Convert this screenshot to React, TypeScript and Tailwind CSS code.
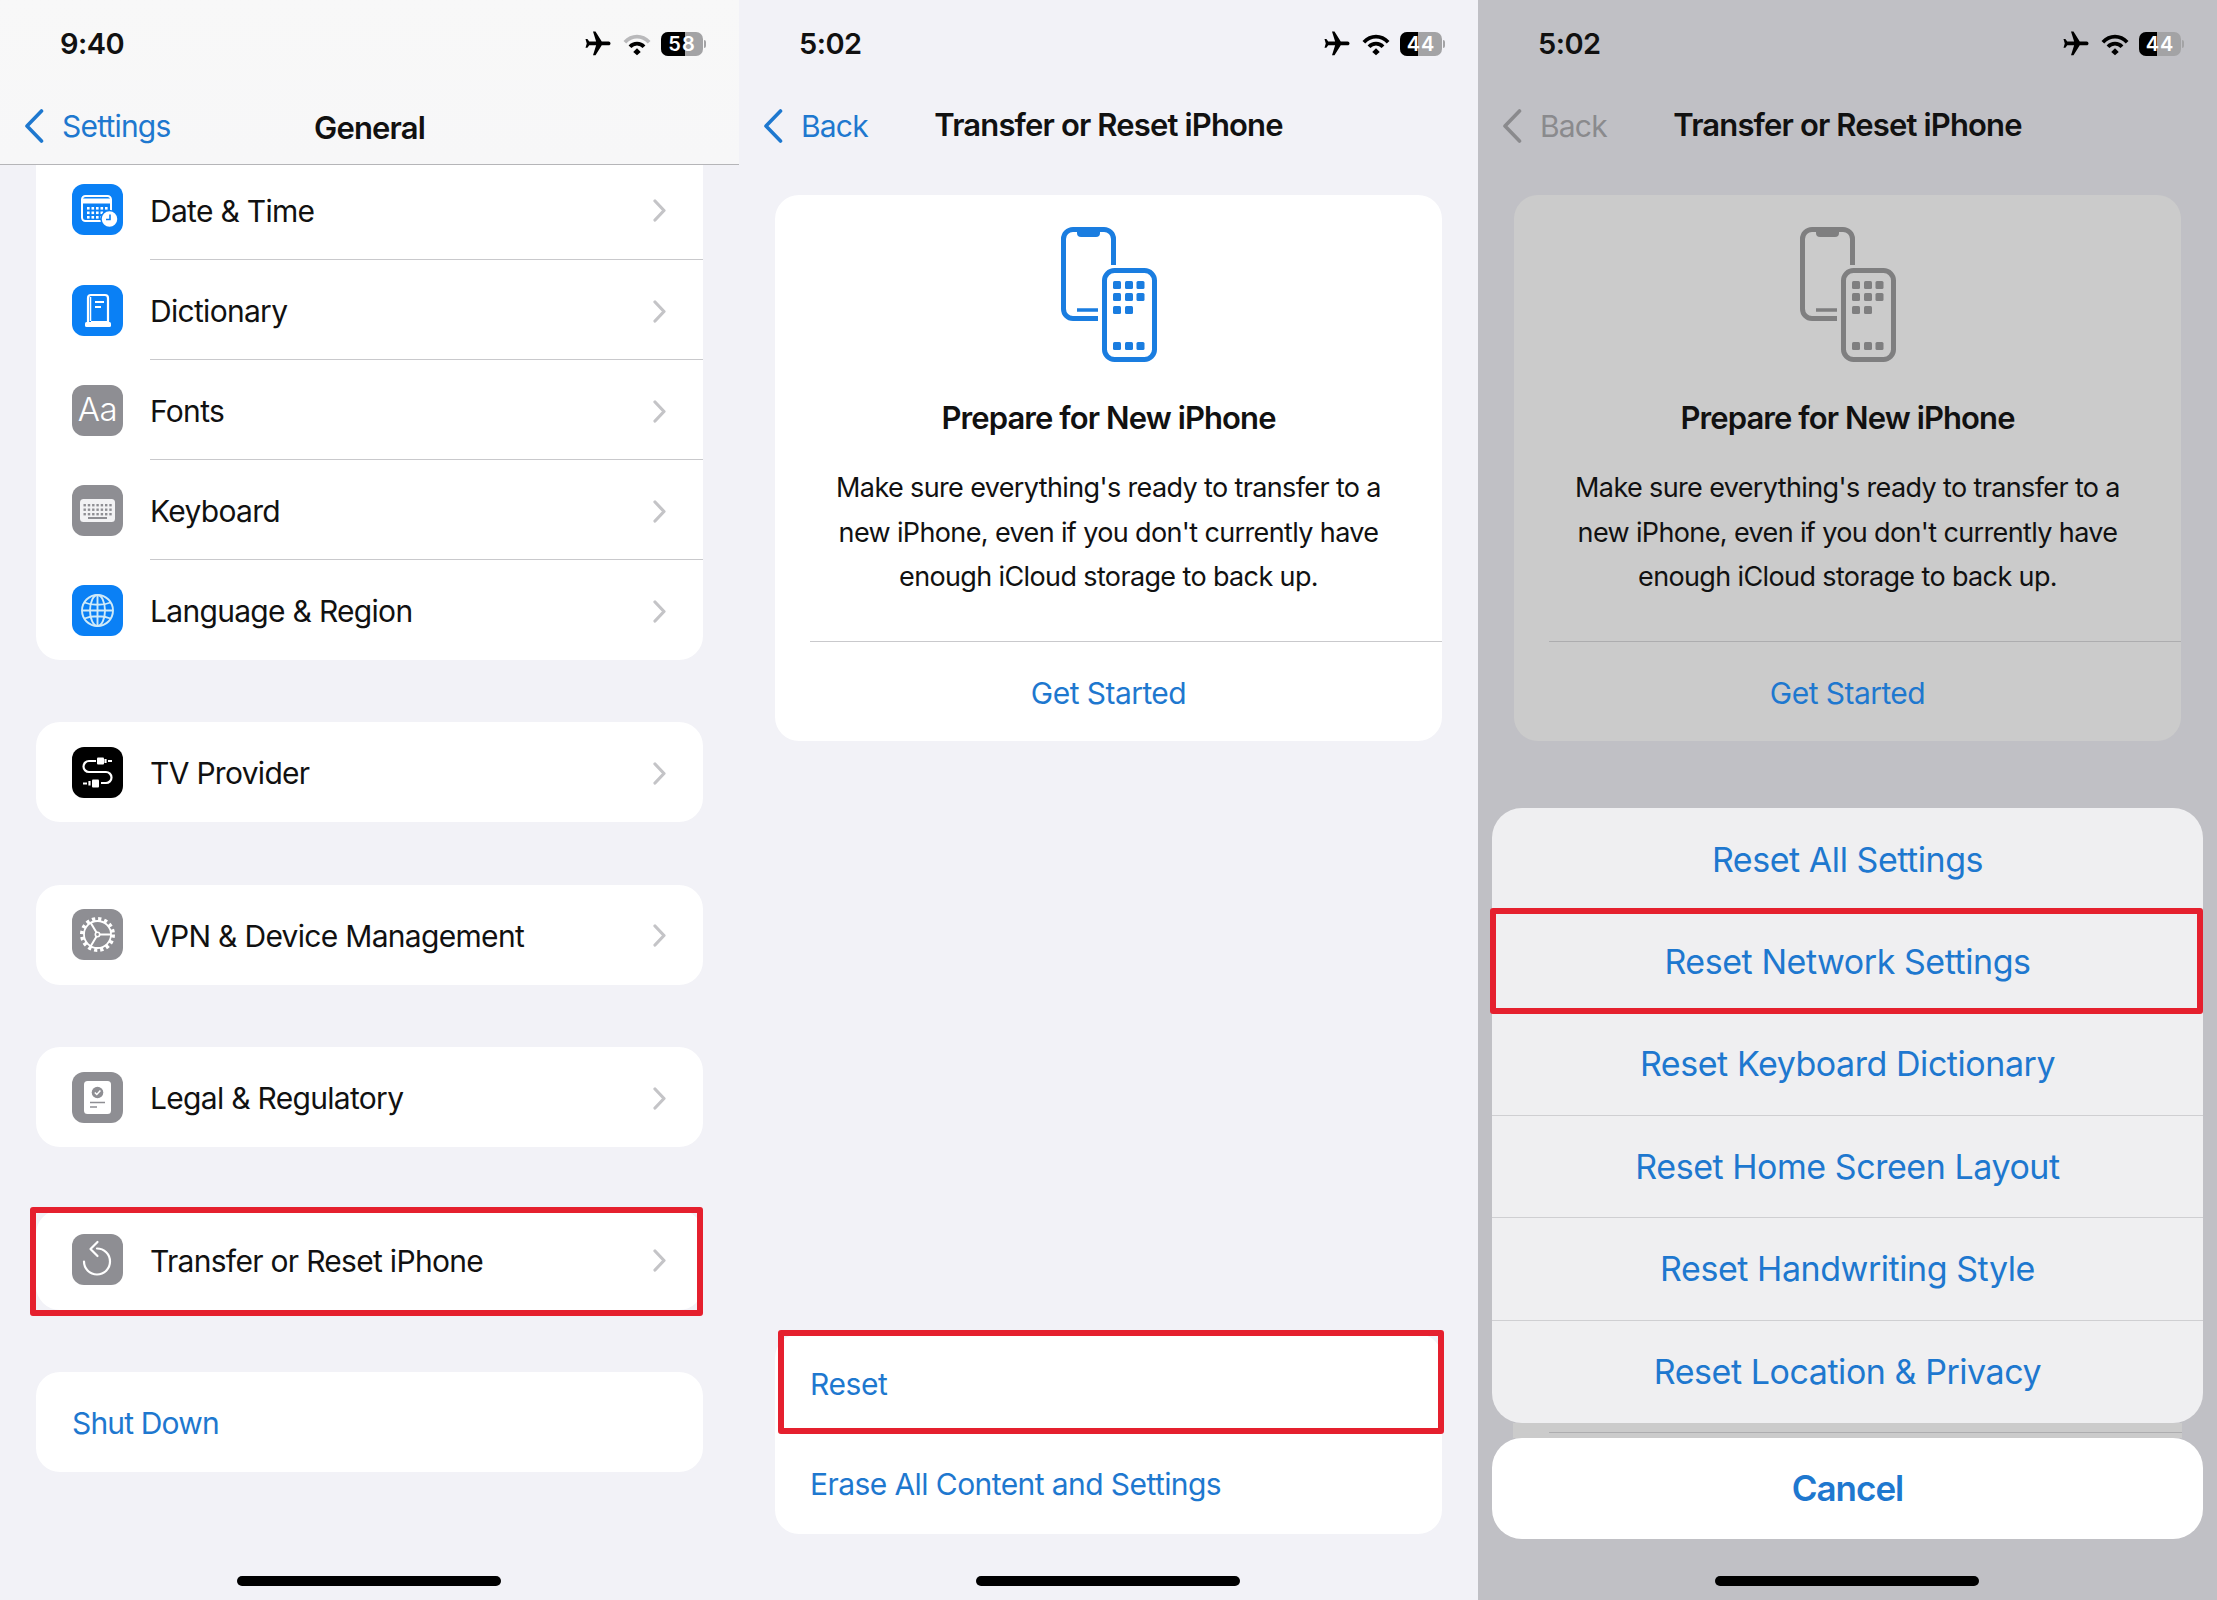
import React from "react";

const BLUE = "#1e78cf";

function Plane() {
  return (
    <svg viewBox="0 0 24 24" className="w-[30px] h-[30px] shrink-0" fill="#000">
      <path transform="rotate(90 12 12)" d="M21 16v-2l-8-5V3.5c0-.83-.67-1.5-1.5-1.5S10 2.67 10 3.5V9l-8 5v2l8-2.5V19l-2 1.5V22l3.5-1 3.5 1v-1.5L13 19v-5.5l8 2.5z" />
    </svg>
  );
}

function Wifi({ faded }: { faded?: boolean }) {
  return (
    <svg viewBox="0 0 30 24" className="w-[28px] h-[23px] shrink-0" fill="none" strokeWidth="4">
      <path d="M2 9.5C9.5 1.5 20.5 1.5 28 9.5" stroke={faded ? "#b9b9bb" : "#000"} />
      <path d="M7.5 14.5C11.5 10 18.5 10 22.5 14.5" stroke="#000" />
      <path d="M11 20 15 16l4 4-4 3.5z" fill="#000" />
    </svg>
  );
}

function Battery({ level }: { level: number }) {
  return (
    <div className="flex items-center gap-[1px] shrink-0">
      <div className="relative w-[42px] h-[24px] rounded-[7px] overflow-hidden bg-[#a3a3a5]">
        <div className="h-full bg-black" style={{ width: `${level}%` }} />
        <div className="absolute inset-0 flex items-center justify-center text-[20px] font-semibold text-white leading-none tracking-[1px]">
          {level}
        </div>
      </div>
      <div className="w-[2px] h-[8px] rounded-r-full bg-[#a3a3a5]" />
    </div>
  );
}

function StatusBar({ time, level, faded }: { time: string; level: number; faded?: boolean }) {
  return (
    <div className="h-[88px] flex items-center justify-between pl-[60px] pr-[33px]">
      <span className="text-[29px] font-semibold text-[#111] tracking-[-0.5px]">{time}</span>
      <div className="flex items-center gap-[10px]">
        <Plane />
        <Wifi faded={faded} />
        <Battery level={level} />
      </div>
    </div>
  );
}

function NavBar({ back, title, backColor = BLUE, titleClass = "-translate-y-[1px]" }: { back: string; title: string; backColor?: string; titleClass?: string }) {
  return (
    <div className="h-[76px] grid grid-cols-[1fr_auto_1fr] items-center px-[24px]">
      <div className="flex items-center gap-[18px]" style={{ color: backColor }}>
        <svg viewBox="0 0 20 34" className="w-[20px] h-[34px] shrink-0" fill="none" stroke="currentColor" strokeWidth="3.6" strokeLinecap="round" strokeLinejoin="round">
          <path d="M17.5 2 3 17l14.5 15" />
        </svg>
        <span className="text-[30px] tracking-[-0.8px]">{back}</span>
      </div>
      <span className={`text-[31px] font-semibold text-[#111] tracking-[-0.85px] ${titleClass}`}>{title}</span>
      <div />
    </div>
  );
}

function HomeBar() {
  return <div className="absolute left-[237px] bottom-[14px] w-[264px] h-[10px] rounded-full bg-black" />;
}

function RedBox({ className }: { className: string }) {
  return <div className={`absolute border-[6px] border-[#e5202e] rounded-[3px] ${className}`} />;
}

function Chevron() {
  return (
    <svg viewBox="0 0 13 23" className="w-[13px] h-[23px] shrink-0 translate-y-[1px]" fill="none" stroke="#c4c4c7" strokeWidth="3.2" strokeLinecap="round" strokeLinejoin="round">
      <path d="M2 2l9 9.5-9 9.5" />
    </svg>
  );
}

function Tile({ bg, children }: { bg: string; children: React.ReactNode }) {
  return (
    <div className={`w-[51px] h-[51px] rounded-[12px] flex items-center justify-center shrink-0 ${bg}`}>
      {children}
    </div>
  );
}

const DateIcon = (
  <svg viewBox="0 0 51 51" className="w-[51px] h-[51px]" fill="none">
    <rect x="10" y="12" width="29" height="25" rx="3.5" stroke="#fff" strokeWidth="2" fill="none" />
    <path d="M10 17h29" stroke="#fff" strokeWidth="5" />
    {[23, 27.5, 32].map((y) => [15, 19.5, 24, 28.5, 33].map((x) => <rect key={`${x}-${y}`} x={x} y={y} width="2.6" height="2.6" fill="#fff" />))}
    <circle cx="37.5" cy="35" r="8.5" fill="#fff" stroke="#0a80f5" strokeWidth="1.5" />
    <path d="M38 30.5v5h-4" stroke="#0a80f5" strokeWidth="1.6" />
  </svg>
);

const DictIcon = (
  <svg viewBox="0 0 51 51" className="w-[51px] h-[51px]" fill="none">
    <path d="M16 38V13a3 3 0 0 1 3-3h14a3 3 0 0 1 3 3v24H19" stroke="#fff" strokeWidth="2.2" fill="#0a80f5" />
    <rect x="13" y="37" width="26" height="5" rx="1.5" fill="#fff" />
    <path d="M18.5 12v24" stroke="#fff" strokeWidth="1.5" />
    <path d="M23 17h9M23 22h6" stroke="#fff" strokeWidth="2" />
  </svg>
);

const KeyboardIcon = (
  <svg viewBox="0 0 51 51" className="w-[51px] h-[51px]">
    <rect x="8" y="14" width="35" height="23" rx="3.5" fill="#f2f2f4" />
    {[19, 23.5, 28].map((y) => [11.5, 15.8, 20.1, 24.4, 28.7, 33, 37.3].map((x) => <rect key={`${x}-${y}`} x={x} y={y} width="2.4" height="2.4" fill="#8e8e93" />))}
    <rect x="16" y="32" width="19" height="2" fill="#8e8e93" />
  </svg>
);

const GlobeIcon = (
  <svg viewBox="0 0 51 51" className="w-[51px] h-[51px]" fill="none" stroke="#cfeaf8" strokeWidth="1.9">
    <circle cx="25.5" cy="25.5" r="15.5" />
    <ellipse cx="25.5" cy="25.5" rx="7.5" ry="15.5" />
    <path d="M25.5 10v31M10 25.5h31M12.5 17.5c7 3 19 3 26 0M12.5 33.5c7-3 19-3 26 0" />
  </svg>
);

const TvIcon = (
  <svg viewBox="0 0 51 51" className="w-[51px] h-[51px]" fill="none" stroke="#fff" strokeWidth="2.2">
    <path d="M24 14h-7a5.5 5.5 0 0 0 0 11h17a5.5 5.5 0 0 1 0 11h-5" />
    <rect x="25" y="10.5" width="7" height="7" rx="1" fill="#fff" stroke="none" />
    <path d="M33.5 12v4M36 14h4" />
    <rect x="20" y="32.5" width="7" height="8" rx="1" fill="#fff" stroke="none" />
    <path d="M17.5 34v4.500M11 36.500h4" />
  </svg>
);

const GearIcon = (
  <svg viewBox="0 0 51 51" className="w-[51px] h-[51px]" fill="none" stroke="#fff">
    <circle cx="25.5" cy="25.5" r="15.500" strokeWidth="4" strokeDasharray="3.2 2.9" />
    <circle cx="25.5" cy="25.5" r="13.5" strokeWidth="1.8" />
    <circle cx="25.5" cy="25.5" r="2.200" strokeWidth="1.6" />
    <path d="M27.500 25.500H39M24.500 23.600 18.500 13.500M24.500 27.400l-6 10" strokeWidth="2" />
  </svg>
);

const LegalIcon = (
  <svg viewBox="0 0 51 51" className="w-[51px] h-[51px]" fill="none">
    <rect x="12" y="9" width="27" height="33" rx="3.5" fill="#fff" />
    <circle cx="25.500" cy="20.500" r="5.800" fill="#8e8e93" />
    <path d="m22.800 20.500 2 2 3.600-4" stroke="#fff" strokeWidth="1.500" />
    <path d="M18 30.500h15" stroke="#8e8e93" strokeWidth="1.500" />
    <path d="M18 35h7" stroke="#8e8e93" strokeWidth="1.500" />
  </svg>
);

const ResetIcon = (
  <svg viewBox="0 0 51 51" className="w-[51px] h-[51px]" fill="none" stroke="#fff" strokeWidth="2.200" strokeLinecap="round" strokeLinejoin="round">
    <path d="M25 14.500a13 13 0 1 1-13 13" />
    <path d="M25.500 8 18.500 15l7 7" />
  </svg>
);

function Row({ icon, label, tall = true, divider = false }: { icon: React.ReactNode; label: string; tall?: boolean; divider?: boolean }) {
  return (
    <div className={`relative flex items-center pl-[36px] pr-[37px] box-border ${tall ? "h-[100px]" : "h-[95px] pb-[6px]"}`}>
      {icon}
      <span className="ml-[27px] flex-1 text-[30px] text-[#111] tracking-[-0.7px] pt-[3px]">{label}</span>
      <Chevron />
      {divider && <div className="absolute left-[114px] right-0 bottom-0 h-px bg-[#c9c9cc]" />}
    </div>
  );
}

function Screen1() {
  return (
    <div className="relative w-[739px] h-[1600px] bg-[#f2f2f7] overflow-hidden shrink-0">
      <div className="bg-gradient-to-b from-[#f8f8f8] to-[#f7f7f8] border-b border-[#b5b5b8]">
        <StatusBar time="9:40" level={58} faded />
        <NavBar back="Settings" title="General" titleClass="translate-y-[2px]" />
      </div>
      <div className="mx-[36px] flex flex-col gap-[62.4px]">
        <div className="bg-white rounded-b-[24px]">
          <Row tall={false} divider icon={<Tile bg="bg-[#0a80f5]">{DateIcon}</Tile>} label="Date & Time" />
          <Row divider icon={<Tile bg="bg-[#0a80f5]">{DictIcon}</Tile>} label="Dictionary" />
          <Row divider icon={<Tile bg="bg-[#8e8e93]"><span className="text-[33px] font-light text-white tracking-[-0.5px]">Aa</span></Tile>} label="Fonts" />
          <Row divider icon={<Tile bg="bg-[#8e8e93]">{KeyboardIcon}</Tile>} label="Keyboard" />
          <Row icon={<Tile bg="bg-[#0a80f5]">{GlobeIcon}</Tile>} label="Language & Region" />
        </div>
        <div className="bg-white rounded-[24px]">
          <Row icon={<Tile bg="bg-black">{TvIcon}</Tile>} label="TV Provider" />
        </div>
        <div className="bg-white rounded-[24px]">
          <Row icon={<Tile bg="bg-[#8e8e93]">{GearIcon}</Tile>} label="VPN & Device Management" />
        </div>
        <div className="bg-white rounded-[24px]">
          <Row icon={<Tile bg="bg-[#8e8e93]">{LegalIcon}</Tile>} label="Legal & Regulatory" />
        </div>
        <div className="relative bg-white rounded-[24px]">
          <Row icon={<Tile bg="bg-[#8e8e93]">{ResetIcon}</Tile>} label="Transfer or Reset iPhone" />
          <RedBox className="-left-[6px] right-0 -top-[3px] -bottom-[6px]" />
        </div>
        <div className="bg-white rounded-[24px] h-[100px] flex items-center pl-[36px]">
          <span className="text-[30px] tracking-[-0.84px] pt-[3px]" style={{ color: BLUE }}>Shut Down</span>
        </div>
      </div>
      <HomeBar />
    </div>
  );
}

function PhonesIcon({ color }: { color: string }) {
  const rows: [number, number[]][] = [
    [54, [52, 64, 75.5]],
    [66, [52, 64, 75.5]],
    [79, [52, 64]],
    [115, [52, 64, 75.5]],
  ];
  return (
    <svg viewBox="0 0 96 135" className="w-[96px] h-[135px] mx-auto block" fill="none">
      <path d="M52.500 38V12a9.500 9.500 0 0 0-9.500-9.500H12A9.500 9.500 0 0 0 2.500 12v70a9.500 9.500 0 0 0 9.500 9.500h25" stroke={color} strokeWidth="5" />
      <path d="M16 2h23v4a4 4 0 0 1-4 4H20a4 4 0 0 1-4-4z" fill={color} />
      <path d="M16 83h21" stroke={color} strokeWidth="3.500" />
      <rect x="43.500" y="43.500" width="50" height="89" rx="10" stroke={color} strokeWidth="5" />
      {rows.map(([y, xs]) => xs.map((x) => <rect key={`${x}-${y}`} x={x} y={y} width="8" height="8" rx="1.500" fill={color} />))}
    </svg>
  );
}

function PrepareCard({ bg, iconColor, divider }: { bg: string; iconColor: string; divider: string }) {
  return (
    <div className={`mx-[36px] mt-[31px] rounded-[24px] text-center ${bg}`}>
      <div className="pt-[32px]">
        <PhonesIcon color={iconColor} />
      </div>
      <div className="mt-[36px] h-[40px] leading-[40px] text-[31px] font-semibold text-[#111] tracking-[-0.9px]">
        Prepare for New iPhone
      </div>
      <div className="mt-[28px] text-[27px] leading-[44.7px] text-[#111] tracking-[-0.63px]">
        <div>Make sure everything's ready to transfer to a</div>
        <div>new iPhone, even if you don't currently have</div>
        <div>enough iCloud storage to back up.</div>
      </div>
      <div className={`mt-[41px] ml-[35px] h-px ${divider}`} />
      <div className="h-[99px] flex items-center justify-center text-[30px] tracking-[-0.55px] pt-[3px]" style={{ color: BLUE }}>
        Get Started
      </div>
    </div>
  );
}

function Screen2() {
  return (
    <div className="relative w-[739px] h-[1600px] bg-[#f2f2f7] overflow-hidden shrink-0 flex flex-col">
      <StatusBar time="5:02" level={44} />
      <NavBar back="Back" title="Transfer or Reset iPhone" />
      <PrepareCard bg="bg-white" iconColor="#1a7de0" divider="bg-[#c9c9cc]" />
      <div className="flex-1" />
      <div className="mx-[36px] mb-[66px] bg-white rounded-[24px]">
        <div className="relative h-[100px] flex items-center pl-[35px]">
          <span className="text-[30px] tracking-[-0.4px]" style={{ color: BLUE }}>Reset</span>
          <RedBox className="left-[3px] -right-[2px] -top-[4px] bottom-0" />
        </div>
        <div className="h-[100px] flex items-center pl-[35px]">
          <span className="text-[30px] tracking-[-0.58px]" style={{ color: BLUE }}>Erase All Content and Settings</span>
        </div>
      </div>
      <HomeBar />
    </div>
  );
}

function SheetRow({ label, divider, red }: { label: string; divider?: boolean; red?: boolean }) {
  return (
    <div className={`relative h-[102.5px] flex items-center justify-center text-[34px] tracking-[-0.45px] ${divider ? "border-b border-[#cfcfd2]" : ""}`} style={{ color: BLUE }}>
      {label}
      {red && <RedBox className="-left-[2px] right-0 -top-[3px] -bottom-[1px]" />}
    </div>
  );
}

function Screen3() {
  return (
    <div className="relative w-[739px] h-[1600px] bg-[#c0c0c5] overflow-hidden shrink-0 flex flex-col">
      <StatusBar time="5:02" level={44} />
      <NavBar back="Back" title="Transfer or Reset iPhone" backColor="#8a8a8d" />
      <PrepareCard bg="bg-[#cbcbcb]" iconColor="#7f7f80" divider="bg-[#adadaf]" />
      <div className="mx-[14px] mt-[67px]">
        <div className="bg-[#efeff1] rounded-[30px]">
          <SheetRow label="Reset All Settings" />
          <SheetRow label="Reset Network Settings" red />
          <SheetRow label="Reset Keyboard Dictionary" divider />
          <SheetRow label="Reset Home Screen Layout" divider />
          <SheetRow label="Reset Handwriting Style" divider />
          <SheetRow label="Reset Location & Privacy" />
        </div>
        <div className="mx-[21px] h-[15px] bg-[#cbcbcb] pt-[9px]">
          <div className="ml-[36px] h-px bg-[#adadaf]" />
        </div>
        <div className="bg-white rounded-[30px] h-[101px] flex items-center justify-center text-[35px] font-semibold tracking-[-1px]" style={{ color: BLUE }}>
          Cancel
        </div>
      </div>
      <HomeBar />
    </div>
  );
}

export default function App() {
  return (
    <div className="flex w-[2217px] h-[1600px] overflow-hidden font-[Inter,sans-serif]">
      <Screen1 />
      <Screen2 />
      <Screen3 />
    </div>
  );
}
